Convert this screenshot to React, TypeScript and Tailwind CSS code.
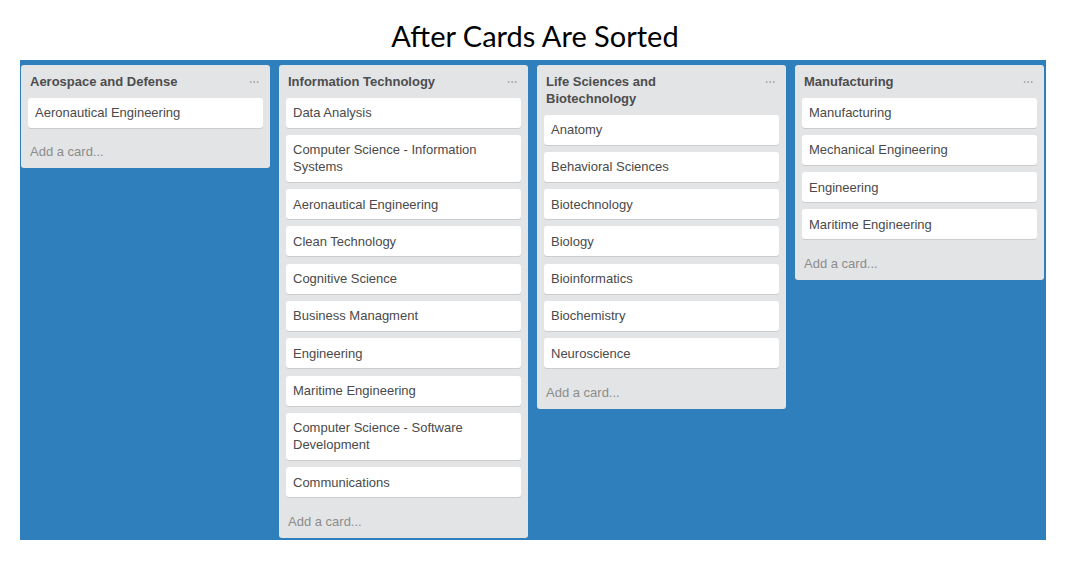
import { MoreHorizontal } from 'lucide-react'

interface List {
  title: string
  cards: string[]
}

const lists: List[] = [
  { title: 'Aerospace and Defense', cards: ['Aeronautical Engineering'] },
  {
    title: 'Information Technology',
    cards: [
      'Data Analysis',
      'Computer Science - Information Systems',
      'Aeronautical Engineering',
      'Clean Technology',
      'Cognitive Science',
      'Business Managment',
      'Engineering',
      'Maritime Engineering',
      'Computer Science - Software Development',
      'Communications',
    ],
  },
  {
    title: 'Life Sciences and Biotechnology',
    cards: [
      'Anatomy',
      'Behavioral Sciences',
      'Biotechnology',
      'Biology',
      'Bioinformatics',
      'Biochemistry',
      'Neuroscience',
    ],
  },
  {
    title: 'Manufacturing',
    cards: ['Manufacturing', 'Mechanical Engineering', 'Engineering', 'Maritime Engineering'],
  },
]

function BoardList({ list }: { list: List }) {
  return (
    <div className="w-[249px] shrink-0 bg-[#e2e4e6] rounded-[3px] flex flex-col">
      {/* Header */}
      <div className="flex items-start justify-between pl-[9px] pr-[10px] pt-[8px] pb-[7.5px]">
        <h2 className="text-[13px] leading-[17px] font-bold text-[#4d4d4d] w-[180px]">{list.title}</h2>
        <MoreHorizontal className="w-[12px] h-[12px] mt-[3px] text-[#999]" strokeWidth={1.5} />
      </div>

      {/* Cards */}
      <div className="px-[7px] flex flex-col gap-[7.3px]">
        {list.cards.map((card, i) => (
          <div
            key={i}
            className="bg-white rounded-[3px] shadow-[0_1px_0_#ccc] px-[7px] py-[6.5px] text-[13px] leading-[17px] text-[#4a4a4a]"
          >
            {card}
          </div>
        ))}
      </div>

      {/* Footer */}
      <div className="pl-[9px] pt-[15.5px] pb-[8px] text-[13px] leading-[17px] text-[#8c8c8c]">
        Add a card...
      </div>
    </div>
  )
}

export default function App() {
  return (
    <div className="w-[1070px] h-[566px] bg-white font-['Liberation_Sans',Arial,sans-serif]">
      <div className="h-[60px] flex items-center justify-center pt-[11px]">
        <h1 className="font-['Lato',sans-serif] text-[29px] text-black leading-none">After Cards Are Sorted</h1>
      </div>
      <div className="ml-[20px] w-[1026px] h-[480px] bg-[#2e7fbc] pl-[1px] pt-[5px] flex items-start gap-[9px]">
        {lists.map((list) => (
          <BoardList key={list.title} list={list} />
        ))}
      </div>
    </div>
  )
}
